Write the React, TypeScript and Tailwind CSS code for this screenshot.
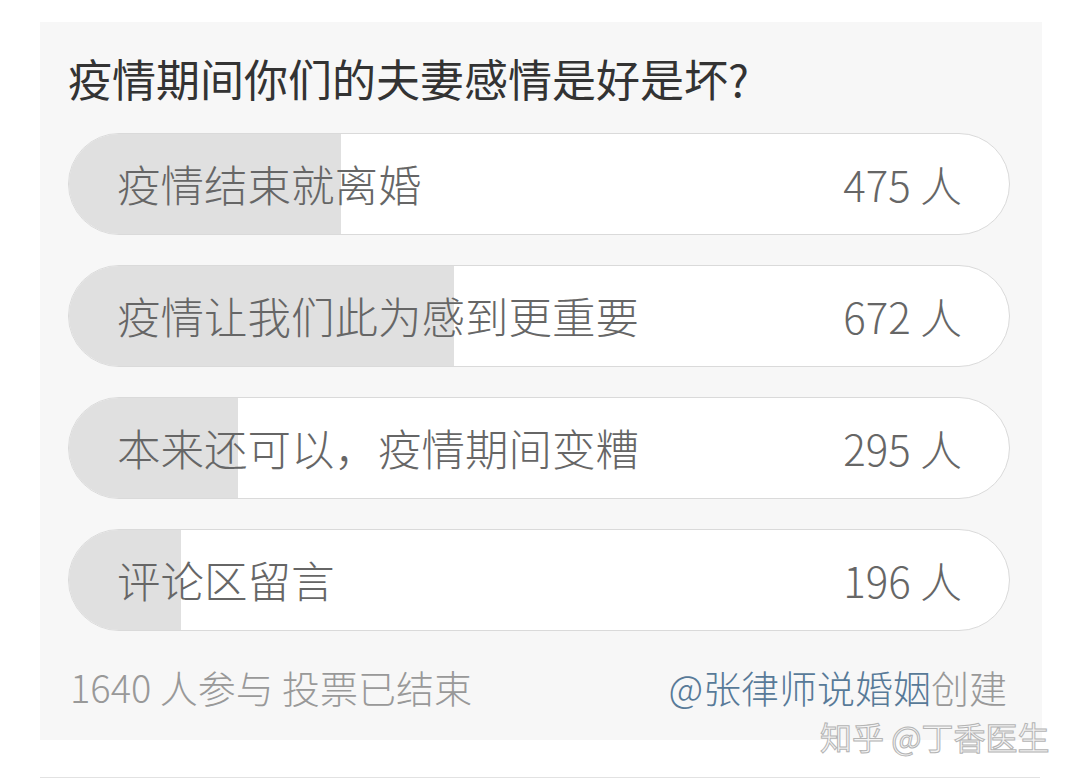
const options = [
  { label: '疫情结束就离婚', count: 475 },
  { label: '疫情让我们此为感到更重要', count: 672 },
  { label: '本来还可以，疫情期间变糟', count: 295 },
  { label: '评论区留言', count: 196 },
];

const total = 1640;

function PollOption({ label, count }: { label: string; count: number }) {
  return (
    <div className="relative h-[102px] rounded-full border border-[#dadada] bg-white overflow-hidden flex items-center justify-between pl-[48px] pr-[47px]">
      <div
        className="absolute inset-y-0 left-0 bg-[#e0e0e0]"
        style={{ width: `${(count / total) * 100}%` }}
      />
      <span className="relative text-[43.5px] leading-none font-light text-[#666666]">{label}</span>
      <span className="relative text-[42px] leading-none font-light text-[#666666]">{count} 人</span>
    </div>
  );
}

export default function App() {
  return (
    <div
      className="relative w-[1080px] h-[784px] bg-white overflow-hidden"
      style={{ fontFamily: '"Noto Sans CJK SC", "Noto Sans", sans-serif' }}
    >
      <div className="ml-[40px] mt-[22px] w-[1002px] h-[718px] bg-[#f7f7f7] pl-[28px] pr-[32px] pt-[30px]">
        <h1 className="text-[44px] leading-[52px] text-[#333333] font-normal">
          疫情期间你们的夫妻感情是好是坏?
        </h1>
        <div className="mt-[29px] flex flex-col gap-[30px]">
          {options.map((o) => (
            <PollOption key={o.label} label={o.label} count={o.count} />
          ))}
        </div>
        <div className="mt-[33px] flex items-center justify-between pl-[2px] pr-[3px] text-[38px] leading-[46px] font-light">
          <span className="text-[#999999]">1640 人参与 投票已结束</span>
          <span>
            <span className="text-[#587a98]">@张律师说婚姻</span>
            <span className="text-[#999999]">创建</span>
          </span>
        </div>
      </div>
      <div className="absolute left-[820px] top-[716px] text-[32px] leading-[40px] text-[#f4f4f4] [-webkit-text-stroke:1px_#b4b4b4]">
        知乎 @丁香医生
      </div>
      <div className="ml-[40px] mt-[37px] w-[1000px] h-px bg-[#e2e2e2]" />
    </div>
  );
}
